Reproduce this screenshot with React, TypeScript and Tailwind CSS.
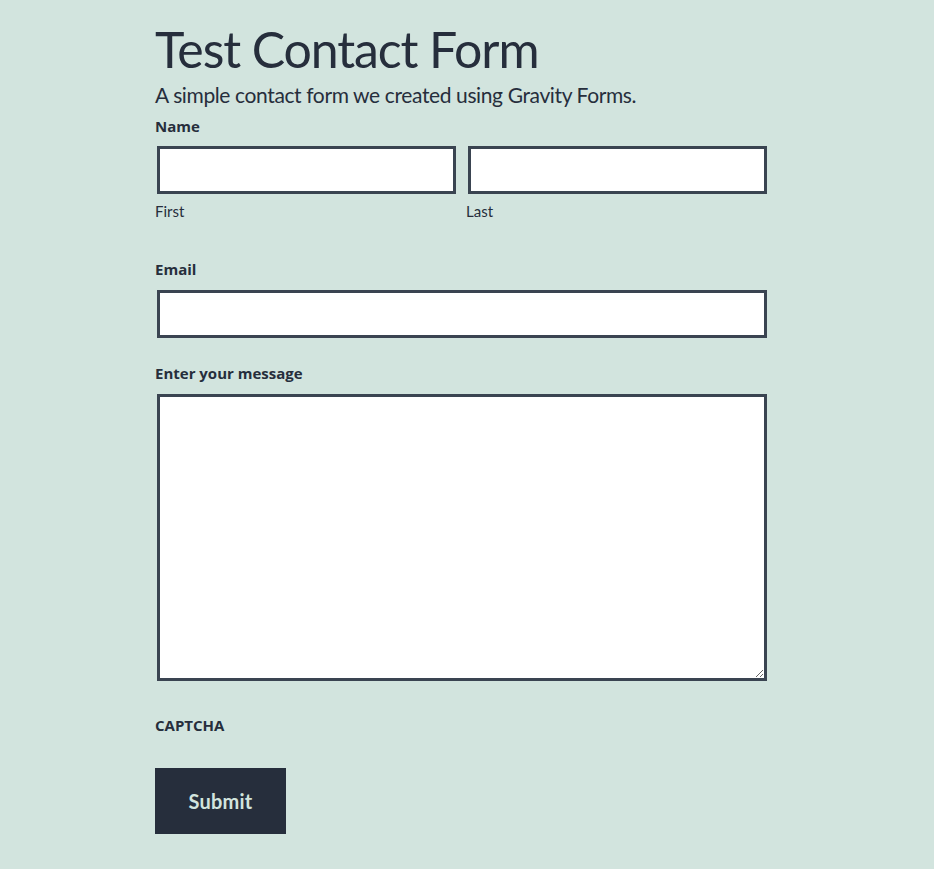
import React from "react";

export default function App() {
  const font = { fontFamily: "Lato, 'Open Sans', sans-serif" };
  const bold = "font-['Open_Sans',sans-serif] text-[15px] leading-[20px] font-bold";
  return (
    <div className="min-h-[869px] w-full bg-[#d2e4de] text-[#262e3c]" style={font}>
      <div className="ml-[155px] w-[612px] pt-[24px]">
        <h1 className="text-[50px] leading-[50px] font-normal tracking-[-1.1px]">Test Contact Form</h1>
        <p className="mt-[7px] text-[21px] leading-[28px] tracking-[-0.38px]">
          A simple contact form we created using Gravity Forms.
        </p>

        <div className={`mt-[7px] ${bold}`}>Name</div>
        <div className="mt-[10px] flex gap-[5px]">
          <div className="w-[306px]">
            <input
              type="text"
              className="ml-[2px] block h-[48px] w-[299px] border-[3px] border-[#3a4451] bg-white outline-none"
            />
            <div className="mt-[7px] text-[15px] leading-[20px]">First</div>
          </div>
          <div className="w-[301px]">
            <input
              type="text"
              className="ml-[2px] block h-[48px] w-[299px] border-[3px] border-[#3a4451] bg-white outline-none"
            />
            <div className="mt-[7px] text-[15px] leading-[20px]">Last</div>
          </div>
        </div>

        <div className={`mt-[38px] ${bold}`}>Email</div>
        <input
          type="email"
          className="mt-[11px] ml-[2px] block h-[48px] w-[610px] border-[3px] border-[#3a4451] bg-white outline-none"
        />

        <div className={`mt-[25px] ${bold}`}>Enter your message</div>
        <textarea className="mt-[11px] ml-[2px] block h-[287px] w-[610px] border-[3px] border-[#3a4451] bg-white outline-none" />

        <div className={`mt-[34px] ${bold}`}>CAPTCHA</div>

        <button
          type="button"
          className="mt-[33px] flex h-[66px] w-[131px] items-center justify-center bg-[#262e3c] text-[20px] font-bold tracking-[0.2px] text-[#d2e4de]"
          style={font}
        >
          Submit
        </button>
      </div>
    </div>
  );
}
